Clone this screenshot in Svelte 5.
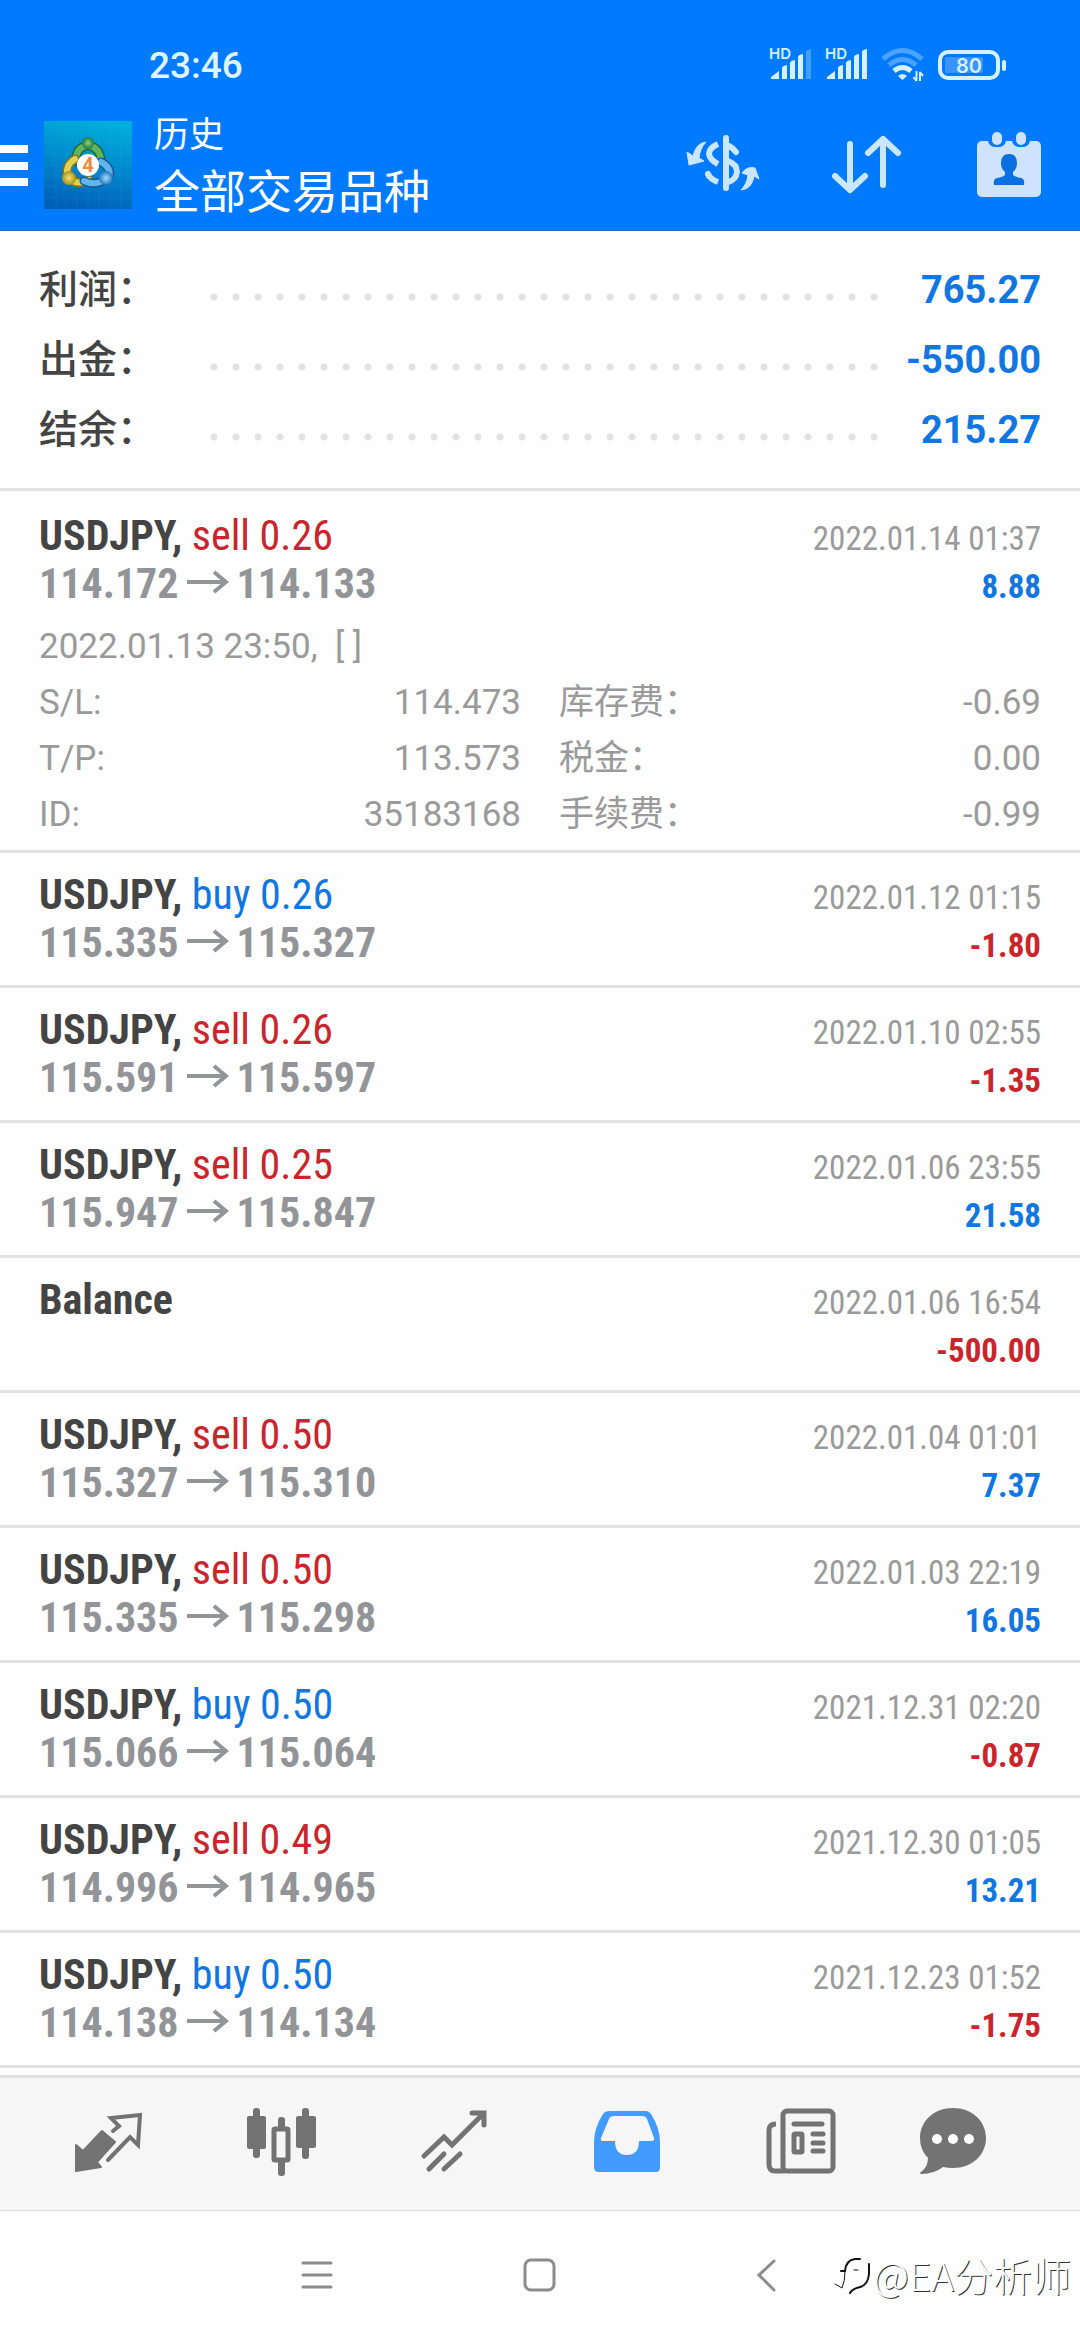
<script lang="ts">
  interface Deal {
    symbol: string;
    side?: 'buy' | 'sell';
    volume?: string;
    open?: string;
    close?: string;
    time: string;
    profit: string;
  }

  const summary = [
    { label: '利润：', value: '765.27' },
    { label: '出金：', value: '-550.00' },
    { label: '结余：', value: '215.27' }
  ];

  const deals: Deal[] = [
    { symbol: 'USDJPY', side: 'sell', volume: '0.26', open: '114.172', close: '114.133', time: '2022.01.14 01:37', profit: '8.88' },
    { symbol: 'USDJPY', side: 'buy', volume: '0.26', open: '115.335', close: '115.327', time: '2022.01.12 01:15', profit: '-1.80' },
    { symbol: 'USDJPY', side: 'sell', volume: '0.26', open: '115.591', close: '115.597', time: '2022.01.10 02:55', profit: '-1.35' },
    { symbol: 'USDJPY', side: 'sell', volume: '0.25', open: '115.947', close: '115.847', time: '2022.01.06 23:55', profit: '21.58' },
    { symbol: 'Balance', time: '2022.01.06 16:54', profit: '-500.00' },
    { symbol: 'USDJPY', side: 'sell', volume: '0.50', open: '115.327', close: '115.310', time: '2022.01.04 01:01', profit: '7.37' },
    { symbol: 'USDJPY', side: 'sell', volume: '0.50', open: '115.335', close: '115.298', time: '2022.01.03 22:19', profit: '16.05' },
    { symbol: 'USDJPY', side: 'buy', volume: '0.50', open: '115.066', close: '115.064', time: '2021.12.31 02:20', profit: '-0.87' },
    { symbol: 'USDJPY', side: 'sell', volume: '0.49', open: '114.996', close: '114.965', time: '2021.12.30 01:05', profit: '13.21' },
    { symbol: 'USDJPY', side: 'buy', volume: '0.50', open: '114.138', close: '114.134', time: '2021.12.23 01:52', profit: '-1.75' }
  ];

  const details = [
    { label: 'S/L:', value: '114.473', feeLabel: '库存费：', fee: '-0.69' },
    { label: 'T/P:', value: '113.573', feeLabel: '税金：', fee: '0.00' },
    { label: 'ID:', value: '35183168', feeLabel: '手续费：', fee: '-0.99' }
  ];

  // last bar is dimmed on the weaker SIM
  const signals = [4, 5];
  const bars = [
    'M1 31V29L9 23V31Z',
    'M12 31V20Q12 18 17 17V31Z',
    'M20 31V15Q20 13 25 12V31Z',
    'M28 31V9Q28 7 33 6V31Z',
    'M36 31V4Q36 2 41 1V31Z'
  ];

  let expanded = $state(0);

  function toggle(index: number) {
    expanded = expanded === index ? -1 : index;
  }
</script>

<div class="screen">
  <header class="header">
    <div class="status">
      <span class="clock">23:46</span>
      <div class="indicators">
        {#each signals as level}
          <div class="signal">
            <span class="hd">HD</span>
            <svg width="42" height="34" viewBox="0 0 42 34" aria-hidden="true">
              {#each bars as d, i}
                <path {d} fill="#d6f0ff" opacity={i < level ? 1 : 0.3} />
              {/each}
            </svg>
          </div>
        {/each}
        <svg width="42" height="36" viewBox="0 0 42 36" fill="none" stroke="#d6f0ff" aria-hidden="true">
          <g stroke-width="5">
            <path d="M1 12Q20.500 -5 40 12" opacity="0.35" />
            <path d="M7 18Q20.500 7 34 18" opacity="0.35" />
            <path d="M12 24Q20.500 17 29 24" />
          </g>
          <path d="M16 29Q20.500 25 25 29L20.500 33Z" fill="#d6f0ff" stroke="none" />
          <path d="M34.500 24V34M34.500 34L31.500 30M38 34V25M38 25L41 29" stroke-width="2" />
        </svg>
        <svg width="68" height="30" viewBox="0 0 68 30" aria-hidden="true">
          <rect x="2" y="2" width="58" height="26" rx="8" fill="none" stroke="#d6f0ff" stroke-width="4" />
          <rect x="7" y="7" width="38" height="16" rx="2" fill="#3a94ff" />
          <rect x="64" y="10" width="4" height="11" rx="2" fill="#d6f0ff" />
          <text x="31" y="23" class="charge">80</text>
        </svg>
      </div>
    </div>

    <div class="toolbar">
      <button class="menu" aria-label="Menu">
        <svg width="28" height="42" viewBox="0 0 28 42" aria-hidden="true">
          <path d="M0 5H28M0 22H28M0 38H28" stroke="#fff" stroke-width="8" />
        </svg>
      </button>
      <svg class="logo" width="88" height="88" viewBox="0 0 88 88" aria-hidden="true">
        <defs>
          <linearGradient id="tile" x1="0.600" y1="0" x2="0.400" y2="1">
            <stop offset="0" stop-color="#00aedb" />
            <stop offset="0.500" stop-color="#0087cc" />
            <stop offset="1" stop-color="#0060b8" />
          </linearGradient>
          <radialGradient id="green"><stop offset="0" stop-color="#8fd08a" /><stop offset="1" stop-color="#1d7a3a" /></radialGradient>
          <radialGradient id="gold"><stop offset="0" stop-color="#f2e27a" /><stop offset="1" stop-color="#a8901c" /></radialGradient>
          <radialGradient id="sky"><stop offset="0" stop-color="#a4dcff" /><stop offset="1" stop-color="#2478bf" /></radialGradient>
        </defs>
        <rect width="88" height="88" fill="url(#tile)" />
        <path d="M12 0V88M22 0V88M33 0V88M44 0V88M55 0V88M66 0V88M77 0V88M0 11H88M0 22H88M0 33H88M0 44H88M0 55H88M0 66H88M0 77H88" stroke="#7fdcff" stroke-opacity="0.080" />
        <g fill="none" stroke-linecap="round">
          <path d="M32 40Q31 27 44 24Q57 27 57 41" stroke="#1f6b3c" stroke-width="9" />
          <path d="M32 40Q31 27 44 24Q57 27 57 41" stroke="#62b45c" stroke-width="6" />
          <path d="M31 38Q20 45 24 57Q33 65 45 59" stroke="#7d7420" stroke-width="9" />
          <path d="M31 38Q20 45 24 57Q33 65 45 59" stroke="#e3d052" stroke-width="6" />
          <path d="M57 41Q68 47 65 56Q53 66 40 60" stroke="#175a98" stroke-width="9" />
          <path d="M57 41Q68 47 65 56Q53 66 40 60" stroke="#62b4ea" stroke-width="6" />
        </g>
        <circle cx="44" cy="22" r="6" fill="url(#green)" />
        <circle cx="25" cy="57" r="7" fill="url(#gold)" />
        <circle cx="62" cy="57" r="7" fill="url(#sky)" />
        <circle cx="44" cy="44" r="11" fill="#fff" />
        <text x="44" y="51" class="version">4</text>
      </svg>
      <div class="titles">
        <div class="caption">历史</div>
        <h1>全部交易品种</h1>
      </div>
      <div class="actions">
        <button aria-label="Symbol filter">
          <svg width="100" height="90" viewBox="0 0 100 90" fill="none" stroke="#cbe6ff" aria-hidden="true">
            <path d="M53 18V68" stroke-width="6" stroke-linecap="round" />
            <path d="M45 24Q36 28 36 34Q37 40 45 44M35 54Q37 59 45 62M55 41Q64 44 64 52Q63 60 55 62" stroke-width="6" />
            <path d="M56 26Q60 28 63 32M35 54L36 56" stroke-width="6" stroke-linecap="round" />
            <path d="M33 22Q23 23 20 36L14 32L16 45L31 41L26 38Q27 28 33 22Z" fill="#cbe6ff" stroke-width="1" stroke-linejoin="round" />
            <path d="M68 70Q79 69 81 56L86 59L82 48Q74 46 69 53L75 55Q74 64 68 70Z" fill="#cbe6ff" stroke-width="1" stroke-linejoin="round" />
          </svg>
        </button>
        <button aria-label="Sort">
          <svg width="100" height="90" viewBox="0 0 100 90" fill="none" stroke="#cbe6ff" stroke-width="6" stroke-linecap="round" stroke-linejoin="round" aria-hidden="true">
            <path d="M34 24V69M19 56L34 70L49 56M67 65V19M52 33L67 19L82 33" />
          </svg>
        </button>
        <button aria-label="Period">
          <svg width="100" height="90" viewBox="0 0 100 90" aria-hidden="true">
            <rect x="18" y="21" width="64" height="56" rx="5" fill="#cfe3ff" />
            <rect x="29" y="8" width="18" height="19" rx="7" fill="#007aff" />
            <rect x="53" y="8" width="18" height="19" rx="7" fill="#007aff" />
            <rect x="33" y="12" width="10" height="13" rx="5" fill="#cfe3ff" />
            <rect x="57" y="12" width="10" height="13" rx="5" fill="#cfe3ff" />
            <path d="M50 34Q58 34 58 43Q58 49 54 52V55Q56 57 62 58Q66 59 65 65H35Q34 59 38 58Q44 57 46 55V52Q42 49 42 43Q42 34 50 34Z" fill="#0a6fe0" />
          </svg>
        </button>
      </div>
    </div>
  </header>

  <section class="summary">
    {#each summary as row}
      <div class="summary-row">
        <span class="summary-label">{row.label}</span>
        <span class="dots"></span>
        <span class="summary-value">{row.value}</span>
      </div>
    {/each}
  </section>

  <main class="deals">
    {#each deals as deal, i}
      <div class="deal">
        <button class="deal-head" aria-expanded={expanded === i} onclick={() => toggle(i)}>
          <span class="line">
            <span class="symbol">{deal.symbol}{#if deal.side}, <span class={deal.side}>{deal.side} {deal.volume}</span>{/if}</span>
            <span class="time">{deal.time}</span>
          </span>
          <span class="line">
            <span class="prices">
              {#if deal.open}
                {deal.open}
                <svg width="42" height="24" viewBox="0 0 42 24" fill="none" stroke="#929497" stroke-width="4" aria-hidden="true">
                  <path d="M0 12H39M27 2L39 12L27 22" />
                </svg>
                {deal.close}
              {/if}
            </span>
            <span class="profit" class:loss={deal.profit.startsWith('-')}>{deal.profit}</span>
          </span>
        </button>
        {#if expanded === i}
          <div class="details">
            <div>2022.01.13 23:50,&nbsp; [ ]</div>
            {#each details as row}
              <div class="detail-row">
                <div class="pair"><span>{row.label}</span><span>{row.value}</span></div>
                <div class="pair"><span>{row.feeLabel}</span><span>{row.fee}</span></div>
              </div>
            {/each}
          </div>
        {/if}
      </div>
    {/each}
  </main>

  <nav class="tabs">
    <button aria-label="Quotes">
      <svg width="120" height="72" viewBox="0 0 120 72" aria-hidden="true">
        <path d="M28 39L35 45L54 25L67 36L49 56L53 61L28 65Z" fill="#737373" stroke="#737373" stroke-width="2" stroke-linejoin="round" />
        <path d="M65 25L71 20L63 12L92 9L90 39L82 31L60 54" fill="none" stroke="#737373" stroke-width="4" stroke-linecap="round" />
      </svg>
    </button>
    <button aria-label="Charts">
      <svg width="120" height="72" viewBox="0 0 120 72" fill="#737373" aria-hidden="true">
        <rect x="26" y="10" width="19" height="33" rx="2" />
        <rect x="32" y="2" width="7" height="50" rx="3" />
        <rect x="75" y="10" width="20" height="32" rx="2" />
        <rect x="81" y="2" width="7" height="51" rx="3" />
        <rect x="53" y="23" width="14" height="31" rx="1" fill="none" stroke="#737373" stroke-width="5" />
        <rect x="57" y="11" width="7" height="14" rx="3" />
        <rect x="57" y="52" width="7" height="18" rx="3" />
      </svg>
    </button>
    <button aria-label="Trade">
      <svg width="120" height="72" viewBox="0 0 120 72" fill="none" stroke="#737373" stroke-width="5" stroke-linecap="round" aria-hidden="true">
        <path d="M30 50L50 31L58 39L89 8M78 7H90V19M35 63L50 48M50 63L66 48" />
      </svg>
    </button>
    <button aria-label="History" aria-current="page">
      <svg width="120" height="72" viewBox="0 0 120 72" aria-hidden="true">
        <path fill="#429bff" fill-rule="evenodd" d="M42 5H78Q81 5 83 8Q92 22 92 36V61Q92 66 88 66H31Q26 66 26 61V36Q26 22 35 8Q37 5 42 5ZM46 10Q42 10 41 13L33 32Q32 35 35 35H47Q47 49 59 49Q71 49 71 35H83Q87 35 86 32L79 13Q78 10 74 10Z" />
      </svg>
    </button>
    <button aria-label="News">
      <svg width="120" height="72" viewBox="0 0 120 72" fill="none" stroke="#737373" stroke-width="5" aria-hidden="true">
        <rect x="42" y="5" width="50" height="60" rx="4" />
        <path d="M35 18Q28 18 28 24V58Q28 65 34 65H44" />
        <path d="M53 18H81M72 28H82M72 37H82M72 45H82" stroke-linecap="round" />
        <rect x="53" y="28" width="8" height="18" rx="1" />
      </svg>
    </button>
    <button aria-label="Messages">
      <svg width="120" height="72" viewBox="0 0 120 72" fill="#737373" aria-hidden="true">
        <path d="M39 2C58 2 72 15 72 32C72 49 58 62 39 62Q34 62 29 61Q20 68 7 68Q5 67 7 66Q14 61 14 52Q6 44 6 32C6 15 20 2 39 2Z" />
        <circle cx="23" cy="33" r="5" fill="#fff" />
        <circle cx="39" cy="33" r="5" fill="#fff" />
        <circle cx="55" cy="33" r="5" fill="#fff" />
      </svg>
    </button>
  </nav>

  <footer class="system">
    <button aria-label="Recent apps">
      <svg width="36" height="36" viewBox="0 0 36 36" fill="none" stroke="#8c8c8c" stroke-width="3" stroke-linecap="round">
        <path d="M4 5H32M4 17H32M4 29H32" />
      </svg>
    </button>
    <button aria-label="Home">
      <svg width="36" height="36" viewBox="0 0 36 36" fill="none" stroke="#8c8c8c" stroke-width="3">
        <rect x="3" y="2" width="29" height="30" rx="6" />
      </svg>
    </button>
    <button aria-label="Back">
      <svg width="36" height="36" viewBox="0 0 36 36" fill="none" stroke="#8c8c8c" stroke-width="3" stroke-linecap="round">
        <path d="M29 3L14 17L29 32" />
      </svg>
    </button>
    <div class="watermark">
      <svg width="40" height="44" viewBox="0 0 40 44" fill="none" stroke="#111" stroke-linecap="round" aria-hidden="true">
        <path d="M8 19H12Q13 8 22 7H27" stroke-width="2" />
        <path d="M36 12V22Q35 33 27 35Q19 37 17 41" stroke-width="2" />
        <path d="M12 20Q12 29 9 36L2 32M21 18H25" stroke-width="1" />
      </svg>
      <span>@EA分析师</span>
    </div>
  </footer>
</div>

<style>
  :global(body) {
    margin: 0;
    background: #fefefe;
  }

  .screen {
    display: flex;
    flex-direction: column;
    min-height: 100vh;
    background: #fefefe;
    color: #444;
    font-family: Roboto, 'Noto Sans CJK SC', sans-serif;
  }

  button {
    margin: 0;
    padding: 0;
    border: 0;
    background: none;
    color: inherit;
    font: inherit;
    cursor: pointer;
  }

  svg {
    display: block;
    flex: none;
  }

  /* Header */
  .header {
    background: #007aff;
    border-bottom: 1px solid #1b6fc4;
    color: #fff;
  }

  .status {
    display: flex;
    justify-content: space-between;
    align-items: center;
    height: 70px;
    padding: 30px 74px 0 149px;
  }

  .clock {
    color: #def4ff;
    font-size: 37px;
    font-weight: 500;
  }

  .indicators {
    display: flex;
    align-items: center;
    gap: 14px;
  }

  .signal {
    position: relative;
  }

  /* sits over the short bars */
  .hd {
    position: absolute;
    top: -4px;
    left: -1px;
    color: #d6f0ff;
    font: 600 15px/20px Inter, sans-serif;
  }

  .charge {
    fill: #d6f0ff;
    font: 600 20px Inter, sans-serif;
    text-anchor: middle;
  }

  .toolbar {
    display: flex;
    align-items: center;
    height: 130px;
  }

  .menu {
    margin-right: 16px;
  }

  .version {
    fill: #ee8a3c;
    font: 700 20px Roboto, sans-serif;
    text-anchor: middle;
  }

  .titles {
    padding: 0 0 3px 22px;
    line-height: 56px;
  }

  .caption {
    font-size: 35px;
  }

  h1 {
    margin: 0;
    font-size: 46px;
    font-weight: 400;
  }

  .actions {
    display: flex;
    margin-left: auto;
  }

  .actions button {
    display: flex;
    justify-content: center;
    width: 143px;
  }

  /* Totals */
  .summary {
    padding: 22px 39px 25px;
    border-bottom: 3px solid #e2e2e2;
  }

  .summary-row {
    display: flex;
    align-items: center;
    height: 70px;
    line-height: 64px;
  }

  .summary-label {
    width: 171px;
    padding-top: 4px;
    font-size: 39px;
    font-weight: 500;
  }

  .dots {
    flex: 1;
    height: 8px;
    margin: 18px 160px 0 0;
    background: radial-gradient(circle at 4px 4px, #e2e2e2 3px, transparent 4px) 0 0 / 22px 8px repeat-x;
  }

  .summary-value {
    margin-left: -160px;
    padding-top: 4px;
    width: 160px;
    color: #1276e0;
    font-size: 38px;
    font-weight: 700;
    text-align: right;
  }

  /* Deals */
  .deals {
    flex: 1;
    padding-top: 3px;
  }

  .deal {
    border-bottom: 3px solid #e2e2e2;
  }

  .deal-head {
    display: block;
    width: 100%;
    height: 132px;
    padding: 18px 39px;
    font-family: 'Roboto Condensed', Roboto, sans-serif;
    text-align: left;
  }

  .line {
    display: flex;
    justify-content: space-between;
    align-items: flex-start;
    height: 48px;
    line-height: 48px;
    font-size: 42px;
  }

  .symbol,
  .prices,
  .profit {
    font-weight: 700;
  }

  .buy,
  .sell {
    font-weight: 400;
  }

  .buy,
  .profit {
    color: #1276e0;
  }

  .sell,
  .profit.loss {
    color: #c9252c;
  }

  .prices {
    display: flex;
    align-items: center;
    gap: 8px;
    color: #929497;
  }

  .prices svg {
    margin-bottom: 4px;
  }

  .time,
  .profit {
    padding-top: 3px;
    font-size: 33px;
  }

  .time {
    color: #9a9a9a;
  }

  .details {
    margin-top: -7px;
    padding: 0 39px 7px;
    color: #9a9a9a;
    font-size: 35px;
    line-height: 56px;
  }

  .detail-row {
    display: grid;
    grid-template-columns: 1fr 1fr;
    gap: 38px;
    height: 56px;
  }

  .pair {
    display: flex;
    justify-content: space-between;
  }

  /* Tab bar */
  .tabs {
    display: grid;
    grid-template-columns: repeat(6, 1fr);
    height: 132px;
    padding: 0 19px 0 21px;
    border-top: 3px solid #e0e0e0;
    border-bottom: 1px solid #ddd;
    background: #f6f6f6;
  }

  .tabs button {
    display: flex;
    justify-content: center;
    align-items: center;
    padding-bottom: 4px;
  }

  .system {
    position: relative;
    display: flex;
    justify-content: center;
    align-items: center;
    gap: 123px;
    height: 129px;
  }

  .system button {
    display: flex;
    justify-content: center;
    width: 100px;
  }

  .watermark {
    position: absolute;
    right: 9px;
    bottom: 38px;
    display: flex;
    align-items: center;
    color: #fff;
    font: 300 39px/56px 'Noto Sans CJK SC', sans-serif;
    text-shadow: 1px 1px 0 #333;
  }
</style>
